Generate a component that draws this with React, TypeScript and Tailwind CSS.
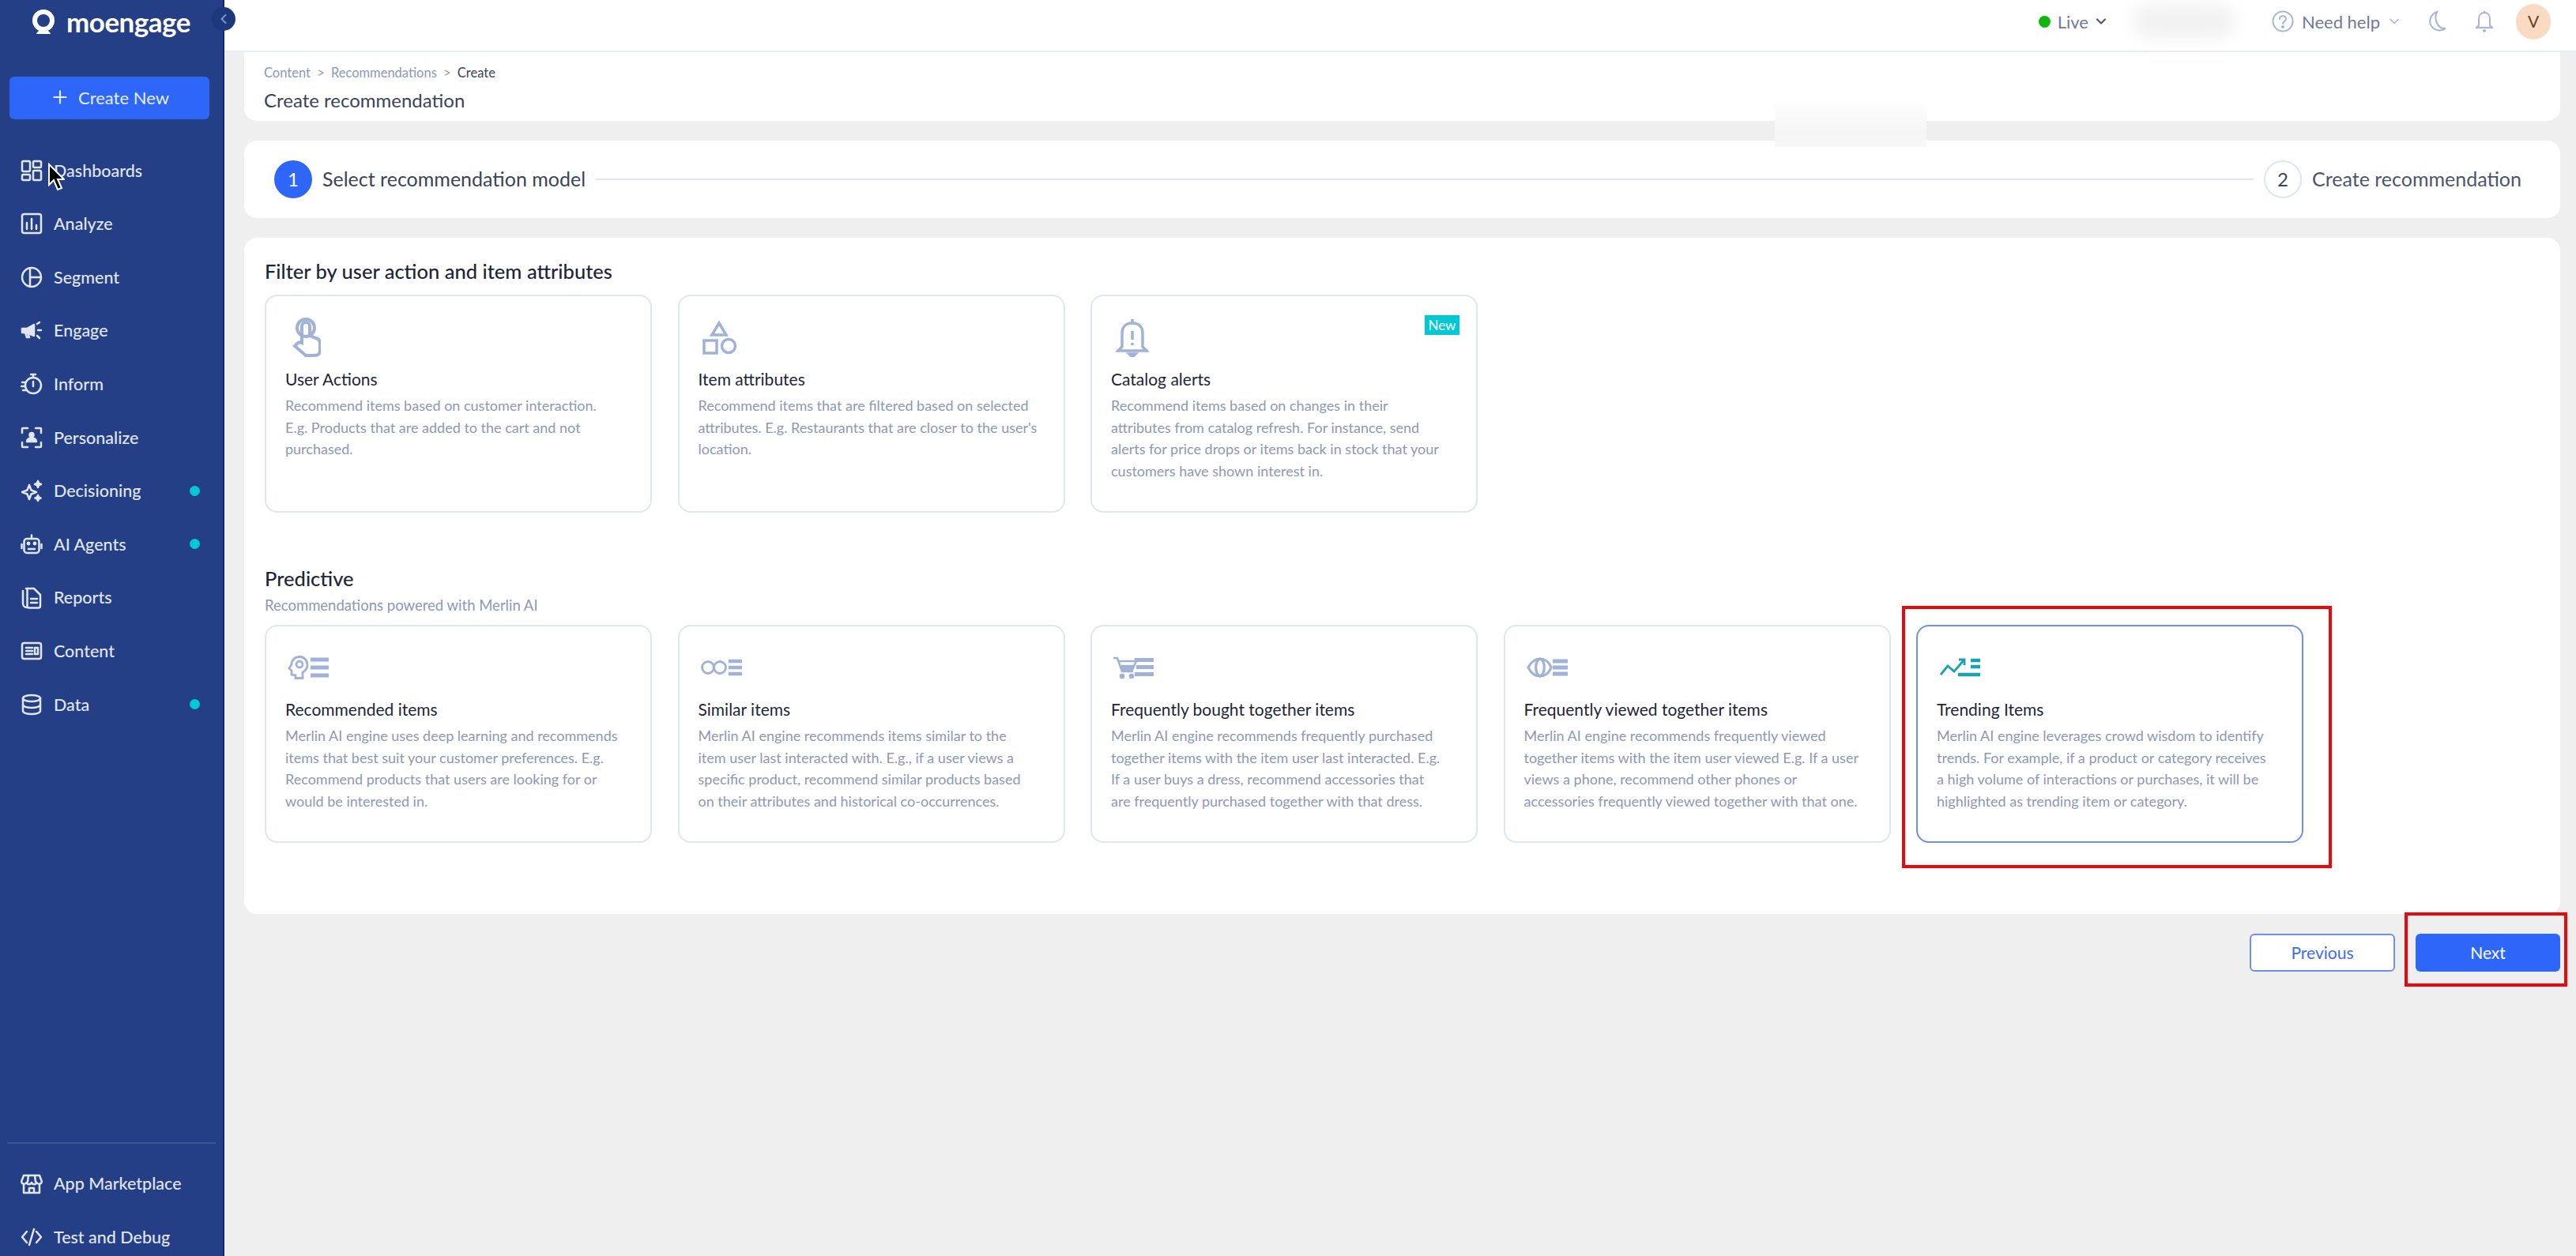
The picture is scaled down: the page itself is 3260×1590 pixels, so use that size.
import { ChevronDown, ChevronLeft, Plus } from "lucide-react"
import type { ReactNode } from "react"

const navIcon = "h-[28px] w-[28px] shrink-0"

function Svg({ children, className = navIcon }: { children: ReactNode; className?: string }) {
  return (
    <svg viewBox="0 0 28 28" fill="none" stroke="currentColor" strokeWidth={2.5} strokeLinecap="round" strokeLinejoin="round" className={className}>
      {children}
    </svg>
  )
}

const navItems: { label: string; dot?: boolean; icon: ReactNode }[] = [
  {
    label: "Dashboards",
    icon: (
      <Svg>
        <rect x="2" y="2" width="10" height="13" rx="1.5" />
        <rect x="16" y="2" width="10" height="8" rx="1.5" />
        <rect x="2" y="19" width="10" height="7" rx="1.5" />
        <rect x="16" y="14" width="10" height="12" rx="1.5" />
      </Svg>
    ),
  },
  {
    label: "Analyze",
    icon: (
      <Svg>
        <rect x="2" y="2" width="24" height="24" rx="2.5" />
        <path d="M8 21v-8M14 21V8M20 21v-5" />
      </Svg>
    ),
  },
  {
    label: "Segment",
    icon: (
      <Svg>
        <circle cx="14" cy="14" r="12" />
        <path d="M12 2.500v23M12 14h13" />
      </Svg>
    ),
  },
  {
    label: "Engage",
    icon: (
      <Svg>
        <path d="M2 11h6l9-5v14l-9-4H2z" fill="currentColor" />
        <path d="M6 16l2 6h3l-2-6M21 5l3-2M22 13h4M21 20l3 3" />
      </Svg>
    ),
  },
  {
    label: "Inform",
    icon: (
      <Svg>
        <circle cx="16" cy="16" r="10" />
        <path d="M16 11v6M13 2h6M16 2v4M2 12h4M1 17h4M3 22h4" />
      </Svg>
    ),
  },
  {
    label: "Personalize",
    icon: (
      <Svg>
        <path d="M2 8V3a1 1 0 0 1 1-1h6M19 2h6a1 1 0 0 1 1 1v5M26 20v5a1 1 0 0 1-1 1h-6M9 26H3a1 1 0 0 1-1-1v-5" />
        <circle cx="14" cy="10.500" r="2.500" fill="currentColor" />
        <path d="M8 19c0-6 12-6 12 0z" fill="currentColor" />
      </Svg>
    ),
  },
  {
    label: "Decisioning",
    dot: true,
    icon: (
      <Svg>
        <path d="M11 7l2.500 6.500L20 16l-6.500 2.500L11 25l-2.500-6.500L2 16l6.500-2.500z" />
        <path d="M22 2l1.200 2.800L26 6l-2.800 1.200L22 10l-1.200-2.800L18 6l2.800-1.200zM22 20l1 2.500 2.500 1-2.500 1L22 27l-1-2.500-2.500-1 2.500-1z" fill="currentColor" />
      </Svg>
    ),
  },
  {
    label: "AI Agents",
    dot: true,
    icon: (
      <Svg>
        <rect x="4.500" y="7" width="19" height="18" rx="3.500" />
        <path d="M14 2.500V7M1.500 14v5M26.500 14v5M10 20h8" />
        <circle cx="10" cy="13" r="1.200" fill="currentColor" />
        <circle cx="18" cy="13" r="1.200" fill="currentColor" />
      </Svg>
    ),
  },
  {
    label: "Reports",
    icon: (
      <Svg>
        <path d="M8 26a5 5 0 0 1-5-5V5" />
        <path d="M7 2h10l8 8v14a2.500 2.500 0 0 1-2.500 2.500H11A2.500 2.500 0 0 1 8.500 24V4" />
        <path d="M13 15h8M13 20h8" />
      </Svg>
    ),
  },
  {
    label: "Content",
    icon: (
      <Svg>
        <rect x="2" y="4" width="24" height="20" rx="2.500" />
        <path d="M7 10h8M7 14h8M7 18h8" />
        <rect x="18" y="10" width="4" height="8" />
      </Svg>
    ),
  },
  {
    label: "Data",
    dot: true,
    icon: (
      <Svg>
        <ellipse cx="14" cy="6" rx="11" ry="4" />
        <path d="M3 6v16c0 2.200 5 4 11 4s11-1.800 11-4V6M3 14c0 2.200 5 4 11 4s11-1.800 11-4" />
      </Svg>
    ),
  },
]

const predictive = [
  {
    title: "Recommended items",
    text: "Merlin AI engine uses deep learning and recommends\nitems that best suit your customer preferences. E.g.\nRecommend products that users are looking for or\nwould be interested in.",
    icon: (
      <svg viewBox="0 0 52 30" fill="none" stroke="currentColor" strokeWidth={2.800} className="ml-[3px] h-[30px] w-[52px]">
        <path d="M15 1.500c-6 0-10 4-10 9.500L2 16l3 3v5l5 1v3.500h9v-7c3-2 6-6 6-10 0-6-5-10.500-10-10.500z" />
        <circle cx="15" cy="11" r="4" />
        <path d="M29 5h23M29 15h23M29 25h23" strokeWidth={5} />
      </svg>
    ),
  },
  {
    title: "Similar items",
    text: "Merlin AI engine recommends items similar to the\nitem user last interacted with. E.g., if a user views a\nspecific product, recommend similar products based\non their attributes and historical co-occurrences.",
    icon: (
      <svg viewBox="0 0 52 22" fill="none" stroke="currentColor" strokeWidth={2.800} className="ml-[3px] h-[22px] w-[52px]">
        <circle cx="9" cy="11" r="7.500" />
        <circle cx="24" cy="11" r="7.500" />
        <path d="M35 3h17M35 11h17M35 19h17" strokeWidth={4.500} />
      </svg>
    ),
  },
  {
    title: "Frequently bought together items",
    text: "Merlin AI engine recommends frequently purchased\ntogether items with the item user last interacted. E.g.\nIf a user buys a dress, recommend accessories that\nare frequently purchased together with that dress.",
    icon: (
      <svg viewBox="0 0 52 28" fill="none" stroke="currentColor" strokeWidth={2.600} className="ml-[2px] h-[28px] w-[52px]">
        <path d="M1 2h5l6 17h14M8 6h22l-5 11H12" />
        <path d="M12 12h14l-2 5H12z" fill="currentColor" />
        <circle cx="12" cy="25" r="2" fill="currentColor" />
        <circle cx="24" cy="25" r="2" fill="currentColor" />
        <path d="M28 4.500h24M30 13.500h22M28 22.500h24" strokeWidth={5} />
      </svg>
    ),
  },
  {
    title: "Frequently viewed together items",
    text: "Merlin AI engine recommends frequently viewed\ntogether items with the item user viewed E.g. If a user\nviews a phone, recommend other phones or\naccessories frequently viewed together with that one.",
    icon: (
      <svg viewBox="0 0 52 26" fill="none" stroke="currentColor" strokeWidth={3.200} className="ml-[3px] h-[26px] w-[52px]">
        <path d="M2 13C6 5 12 2 17 2s11 3 14 11c-3 8-9 11-14 11S6 21 2 13z" />
        <path d="M17 2c-7 3-7 19 0 22 7-3 7-19 0-22z" />
        <path d="M33 5h19M33 13h19M33 21h19" strokeWidth={5} />
      </svg>
    ),
  },
  {
    title: "Trending Items",
    text: "Merlin AI engine leverages crowd wisdom to identify\ntrends. For example, if a product or category receives\na high volume of interactions or purchases, it will be\nhighlighted as trending item or category.",
    selected: true,
    icon: (
      <svg viewBox="0 0 52 24" fill="none" stroke="#1aa3ad" strokeWidth={2.800} className="ml-[4px] h-[24px] w-[52px]">
        <path d="M1 21l9-11 8 7 12-14M24 2h7v7" />
        <path d="M39 3h12M39 11h12M23 21h28" strokeWidth={4.500} />
      </svg>
    ),
  },
]

function RecCard({ title, text, icon, badge, selected }: { title: string; text: string; icon: ReactNode; badge?: boolean; selected?: boolean }) {
  return (
    <div className={`relative h-[276px] w-[490px] rounded-[16px] border-2 bg-white px-[24px] ${selected ? "border-[#6f8ff0]" : "border-[#e0e5f3]"}`}>
      {badge && <span className="absolute right-[21px] top-[24px] flex h-[25px] w-[44px] items-center justify-center bg-[#00c8d7] text-[17px] text-white">New</span>}
      <div className="flex h-[91px] items-start pt-[27px] text-[#a0b2d7]">
        <div className="flex h-[50px] items-center">{icon}</div>
      </div>
      <div className="text-[21px] leading-[28px] text-[#1e2539]">{title}</div>
      <p className="mt-[6px] whitespace-pre text-[18px] leading-[27.700px] text-[#8d98b5]">{text}</p>
    </div>
  )
}

function NavRow({ label, icon, dot }: { label: string; icon: ReactNode; dot?: boolean }) {
  return (
    <div className="flex h-[67.600px] items-center pl-[26px] pr-[29px]">
      {icon}
      <span className="ml-[14px] flex-1 text-[21.500px] font-medium text-[#e1e6f3]">{label}</span>
      {dot && <span className="h-[13px] w-[13px] rounded-full bg-[#00c8d7]" />}
    </div>
  )
}

export default function App() {
  return (
    <div className="relative flex h-[1590px] w-[3260px] overflow-hidden bg-[#efefef] font-['Lato',sans-serif]">
      <aside className="relative flex w-[284px] shrink-0 flex-col border-r-2 border-[#14267a] bg-[#243f85] text-[#e1e6f3]">
        <div className="flex h-[55px] items-center pl-[39px]">
          <svg viewBox="0 0 32 32" fill="none" className="h-[32px] w-[32px]">
            <circle cx="16" cy="14" r="11" stroke="white" strokeWidth={6} />
            <path d="M7 31c2-7 16-7 18 0z" fill="white" />
          </svg>
          <span className="ml-[13px] text-[35px] font-bold leading-none tracking-[-0.5px] text-white">moengage</span>
        </div>
        <button className="mx-[12px] mt-[42px] flex h-[54px] w-[253px] items-center justify-center gap-[10px] rounded-[6px] bg-[#2e66fa] pb-[2px] text-[22px] text-[#e6edff]">
          <Plus className="h-[26px] w-[26px]" />
          Create New
        </button>
        <nav className="mt-[31px]">
          {navItems.map((item) => (
            <NavRow key={item.label} label={item.label} icon={item.icon} dot={item.dot} />
          ))}
        </nav>
        <div className="mb-[-10px] mt-auto">
          <div className="mx-[9px] border-t-2 border-[#3a5393]" />
          <div className="pt-[17px]">
            <NavRow
              label="App Marketplace"
              icon={
                <Svg>
                  <path d="M4 3h20l3 8a3.500 3.500 0 0 1-6.500 1 3.500 3.500 0 0 1-6.500 0 3.500 3.500 0 0 1-6.500 0A3.500 3.500 0 0 1 1 11z" />
                  <path d="M4 14v11h20V14M11 25v-6h6v6M10 3l-1 8M18 3l1 8" />
                </Svg>
              }
            />
            <NavRow
              label="Test and Debug"
              icon={
                <Svg>
                  <path d="M8 7l-6 7 6 7M20 7l6 7-6 7M17 4l-6 20" />
                </Svg>
              }
            />
          </div>
        </div>
        <span className="absolute right-[-16px] top-[9px] z-10 flex h-[30px] w-[30px] items-center justify-center rounded-full bg-[#1e387c] text-[#7c93c8]">
          <ChevronLeft className="h-[20px] w-[20px]" strokeWidth={2.500} />
        </span>
      </aside>

      <main className="flex min-w-0 flex-1 flex-col">
        <header className="flex h-[66px] shrink-0 items-center justify-end border-b-2 border-[#e8ecf6] bg-white pb-[10px] pr-[32px] text-[22px] text-[#6f7a96]">
          <span className="h-[15px] w-[15px] rounded-full bg-[#0cb80c]" />
          <span className="ml-[9px]">Live</span>
          <ChevronDown className="ml-[6px] h-[20px] w-[20px] text-[#4a5470]" strokeWidth={2.500} />
          <div className="ml-[30px] mr-[16px] h-[44px] w-[130px] rounded-full bg-[#f2f2f2] blur-[10px]" />
          <svg viewBox="0 0 28 28" fill="none" stroke="#a5b5d8" strokeWidth={2} className="ml-[30px] h-[28px] w-[28px]">
            <circle cx="14" cy="14" r="12.500" />
            <path d="M10 11c0-5 8-5 8 0 0 3-4 3-4 6" strokeLinecap="round" />
            <circle cx="14" cy="21" r="1" fill="#a5b5d8" />
          </svg>
          <span className="ml-[10px]">Need help</span>
          <ChevronDown className="ml-[8px] h-[20px] w-[20px] text-[#a5b5d8]" strokeWidth={2} />
          <svg viewBox="0 0 24 28" fill="none" stroke="#a5b5d8" strokeWidth={2} className="ml-[33px] h-[28px] w-[24px]">
            <path d="M11 2C3 5 0 14 4 20s12 7 18 3C14 24 6 14 11 2z" />
          </svg>
          <svg viewBox="0 0 22 28" fill="none" stroke="#a5b5d8" strokeWidth={2} className="ml-[36px] h-[28px] w-[22px]">
            <path d="M11 3c-4 0-7 3-7 8v8l-3 3h20l-3-3v-8c0-5-3-8-7-8zM11 1v2" />
            <circle cx="11" cy="26" r="1" fill="#a5b5d8" />
          </svg>
          <span className="ml-[29px] flex h-[45px] w-[44px] items-center justify-center rounded-full bg-[#fbdac4] text-[21px] text-[#6e3f16]">V</span>
        </header>

        <div className="flex flex-1 flex-col pl-[25px] pr-[20px]">
          <section className="flex h-[87px] shrink-0 flex-col rounded-b-[16px] bg-white pl-[25px] pt-[16px]">
            <div className="text-[16.500px] leading-[20px] text-[#8d98b5]">
              Content <span className="mx-[4px]">&gt;</span> Recommendations <span className="mx-[4px]">&gt;</span> <span className="text-[#3b435a]">Create</span>
            </div>
            <h1 className="mt-[10px] text-[24px] font-normal leading-[30px] text-[#3b435a]">Create recommendation</h1>
          </section>

          <section className="mt-[25px] flex h-[98px] shrink-0 items-center rounded-[16px] bg-white pl-[38px] pr-[49px]">
            <span className="flex h-[48px] w-[48px] shrink-0 items-center justify-center rounded-full bg-[#2e66fa] text-[24px] text-white">1</span>
            <span className="ml-[13px] text-[25px] text-[#3b435a]">Select recommendation model</span>
            <div className="mx-[13px] h-[2px] flex-1 bg-[#dde3f2]" />
            <span className="flex h-[48px] w-[48px] shrink-0 items-center justify-center rounded-full border-2 border-[#e0e5f3] text-[24px] text-[#3b435a]">2</span>
            <span className="ml-[13px] text-[25px] text-[#4c556e]">Create recommendation</span>
          </section>

          <section className="mt-[25px] h-[856px] shrink-0 rounded-[16px] bg-white pl-[26px] pt-[26px]">
            <h2 className="text-[25.500px] font-medium leading-[32px] text-[#1e2539]">Filter by user action and item attributes</h2>
            <div className="mt-[14px] flex gap-[32.500px]">
              <RecCard
                title="User Actions"
                text={"Recommend items based on customer interaction.\nE.g. Products that are added to the cart and not\npurchased."}
                icon={
                  <svg viewBox="0 0 36 50" fill="none" stroke="currentColor" strokeWidth={4} className="ml-[9px] h-[50px] w-[36px]">
                    <circle cx="17" cy="13" r="11" />
                    <path d="M12 30V11a5 5 0 0 1 10 0v12l8 3c3 1 5 3 5 6v10c0 4-3 6-7 6H17L3 36l3-3c2-2 4-2 6-1z" />
                  </svg>
                }
              />
              <RecCard
                title="Item attributes"
                text={"Recommend items that are filtered based on selected\nattributes. E.g. Restaurants that are closer to the user's\nlocation."}
                icon={
                  <svg viewBox="0 0 44 44" fill="none" stroke="currentColor" strokeWidth={3.500} className="ml-[5px] h-[44px] w-[44px]">
                    <path d="M21 4l9 15H12z" />
                    <rect x="2" y="26" width="16" height="16" />
                    <circle cx="33" cy="33" r="8.500" />
                  </svg>
                }
              />
              <RecCard
                title="Catalog alerts"
                badge
                text={"Recommend items based on changes in their\nattributes from catalog refresh. For instance, send\nalerts for price drops or items back in stock that your\ncustomers have shown interest in."}
                icon={
                  <svg viewBox="0 0 42 50" fill="none" stroke="currentColor" strokeWidth={3.500} className="ml-[6px] h-[50px] w-[42px]">
                    <path d="M21 2v6M21 7c-8 0-13 5-13 13v17l-5 5h36l-5-5V20c0-8-5-13-13-13z" />
                    <path d="M21 17v11M21 32v3M17 46h8l-4 4z" />
                  </svg>
                }
              />
            </div>
            <h2 className="mt-[67px] text-[25.500px] font-medium leading-[32px] text-[#1e2539]">Predictive</h2>
            <p className="mt-[5px] text-[18.500px] leading-[26px] text-[#8d98b5]">Recommendations powered with Merlin AI</p>
            <div className="mt-[12px] flex gap-[32.500px]">
              {predictive.map((card) => (
                <div key={card.title} className="relative">
                  <RecCard {...card} />
                  {card.selected && <span className="absolute -bottom-[32px] -left-[18px] -right-[36px] -top-[24px] border-4 border-[#e8090f]" />}
                </div>
              ))}
            </div>
          </section>

          <div className="mt-[25px] flex justify-end gap-[26px]">
            <button className="h-[48px] w-[184px] rounded-[6px] border-2 border-[#6f8ff0] bg-white text-[21px] text-[#3d6cf2]">Previous</button>
            <div className="relative">
              <button className="h-[48px] w-[183px] rounded-[6px] bg-[#2e66fa] text-[21px] text-white">Next</button>
              <span className="absolute -bottom-[19px] -left-[14px] -right-[9px] -top-[27px] border-4 border-[#e8090f]" />
            </div>
          </div>
        </div>
      </main>

      <div className="absolute left-[2246px] top-[132px] h-[54px] w-[192px] bg-linear-to-b from-[#fdfdfd] via-[#f5f5f5] via-70% to-[#f8f8f8]" />
      <svg viewBox="0 0 22 36" className="absolute left-[60px] top-[206px] h-[36px] w-[22px]">
        <path d="M2 2v26l6-6 5 12 5-2-5-11h8z" fill="black" stroke="white" strokeWidth={2} />
      </svg>
    </div>
  )
}
